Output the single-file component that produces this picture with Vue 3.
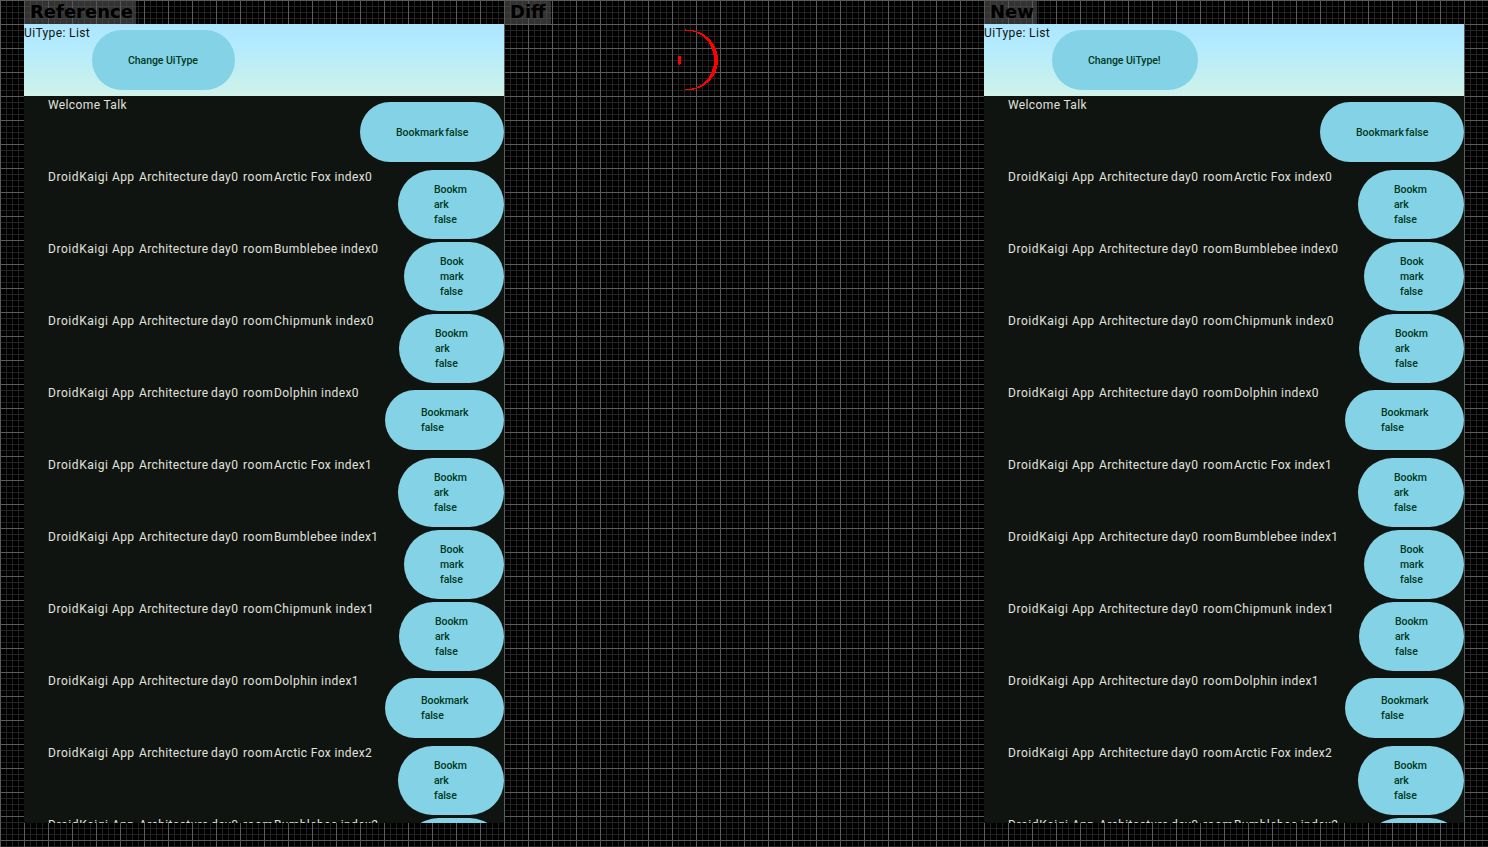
<script setup>
const rooms = [
  { name: 'Arctic Fox', lines: ['Bookm', 'ark', 'false'], kind: 'fox' },
  { name: 'Bumblebee', lines: ['Book', 'mark', 'false'], kind: 'bee' },
  { name: 'Chipmunk', lines: ['Bookm', 'ark', 'false'], kind: 'chip' },
  { name: 'Dolphin', lines: ['Bookmark', 'false'], kind: 'dolphin' },
]
const prefix = ['DroidKaigi', 'App', 'Architecture', 'day0', 'room']
const sessions = [{ id: 'welcome', words: [], tail: 'Welcome Talk', lines: ['Bookmark false'], kind: 'welcome' }]
for (let i = 0; i < 10; i++) {
  const room = rooms[i % 4]
  sessions.push({
    id: `s${i}`,
    words: prefix,
    tail: `${room.name} index${Math.floor(i / 4)}`,
    lines: room.lines,
    kind: room.kind,
  })
}
const columns = [
  { label: 'Reference', action: 'Change UiType', kind: 'before' },
  { label: 'Diff', kind: 'diff' },
  { label: 'New', action: 'Change UiType!', kind: 'after' },
]
</script>

<template>
  <main class="board">
    <section v-for="col in columns" :key="col.label" class="column">
      <div class="caption"><span class="tag" :class="'tag-' + col.kind">{{ col.label }}</span></div>
      <div v-if="col.kind === 'diff'" class="pane">
        <svg class="marks" width="480" height="96" viewBox="504 24 480 96">
          <path d="M685 29.5C704 29 718 43 718 60C718 77 704 91 685 90.4V89.4C702 89.500 714 77 714 60C714 43 702 30.500 685 30.500Z" fill="#f00" />
          <path d="M678 56h3v8h-1v1h-1v-1h-1z" fill="#f00" />
        </svg>
      </div>
      <div v-else class="pane app">
        <header class="top">
          <span class="body status">UiType: List</span>
          <button class="pill" :class="col.kind"><span>{{ col.action }}</span></button>
        </header>
        <ul class="list">
          <li v-for="s in sessions" :key="s.id" class="row">
            <span class="body title"><span v-for="w in s.words" :key="w" class="word" :class="'w-' + w">{{ w }} </span><span :class="'t-' + s.kind">{{ s.tail }}</span></span>
            <button class="pill" :class="s.kind"><span v-for="line in s.lines" :key="line">{{ line }}</span></button>
          </li>
        </ul>
      </div>
    </section>
  </main>
</template>

<style>
body { background: #000; overflow: hidden; }
</style>

<style scoped>
.board {
  display: flex;
  box-sizing: border-box;
  width: 1488px;
  height: 847px;
  padding: 0 24px;
  background:
    linear-gradient(90deg, #5c5c5c 1px, transparent 1px) 0 0 / 24px 24px,
    linear-gradient(#5c5c5c 1px, transparent 1px) 0 0 / 24px 24px,
    linear-gradient(90deg, #222 1px, transparent 1px) 0 0 / 6px 6px,
    linear-gradient(#222 1px, transparent 1px) 0 0 / 6px 6px,
    #000;
}
.column { width: 480px; }
.caption { height: 24px; display: flex; }
.tag {
  box-sizing: border-box;
  height: 24px;
  padding-left: 6px;
  background: rgba(85, 85, 85, .6);
  color: #000;
  font: bold 18px/23px "DejaVu Sans", sans-serif;
  white-space: nowrap;
}
.tag-before { width: 112px; }
.tag-diff { width: 47px; }
.tag-after { width: 53px; }
.pane { height: 799px; overflow: hidden; }
.marks { display: block; shape-rendering: crispEdges; }
.app { background: #101411; }
.body { font: 400 12px/18px Roboto, sans-serif; letter-spacing: .375px; white-space: pre; }
.top {
  height: 72px;
  display: flex;
  align-items: center;
  background: linear-gradient(#ade5ff, #b2ebff 28%, #bdeef4 58%, #d0f2ea);
}
.status { width: 68px; align-self: flex-start; color: #101411; }
.list { list-style: none; margin: 0; padding: 0; }
.row { height: 72px; display: flex; align-items: center; padding-left: 24px; }
.title { flex: 1; align-self: flex-start; color: #e0e3de; display: flex; }
.word { flex: none; }
.w-DroidKaigi { width: 64px; letter-spacing: .56px; }
.w-App { width: 27px; }
.w-Architecture { width: 72px; }
.w-day0 { width: 32px; letter-spacing: .45px; }
.w-room { width: 31px; letter-spacing: .55px; }
.t-chip { letter-spacing: .52px; }
.t-dolphin { letter-spacing: .44px; }
.pill {
  box-sizing: border-box;
  height: 60px;
  border: 0;
  border-radius: 30px;
  padding: 0 0 0 36px;
  background: #84d2e6;
  color: #00391c;
  font: 500 10.5px/15px Roboto, sans-serif;
  letter-spacing: -.06px;
  text-align: left;
  display: flex;
  flex-direction: column;
  justify-content: center;
  align-items: flex-start;
  flex: none;
  white-space: nowrap;
}
.before { width: 143px; }
.after { width: 146px; }
.welcome { width: 144px; word-spacing: -1.1px; letter-spacing: -.02px; }
.fox, .bee, .chip { height: 69px; border-radius: 34.5px; }
.fox { width: 106px; }
.bee { width: 100px; }
.chip { width: 105px; }
.dolphin { width: 119px; }
</style>
